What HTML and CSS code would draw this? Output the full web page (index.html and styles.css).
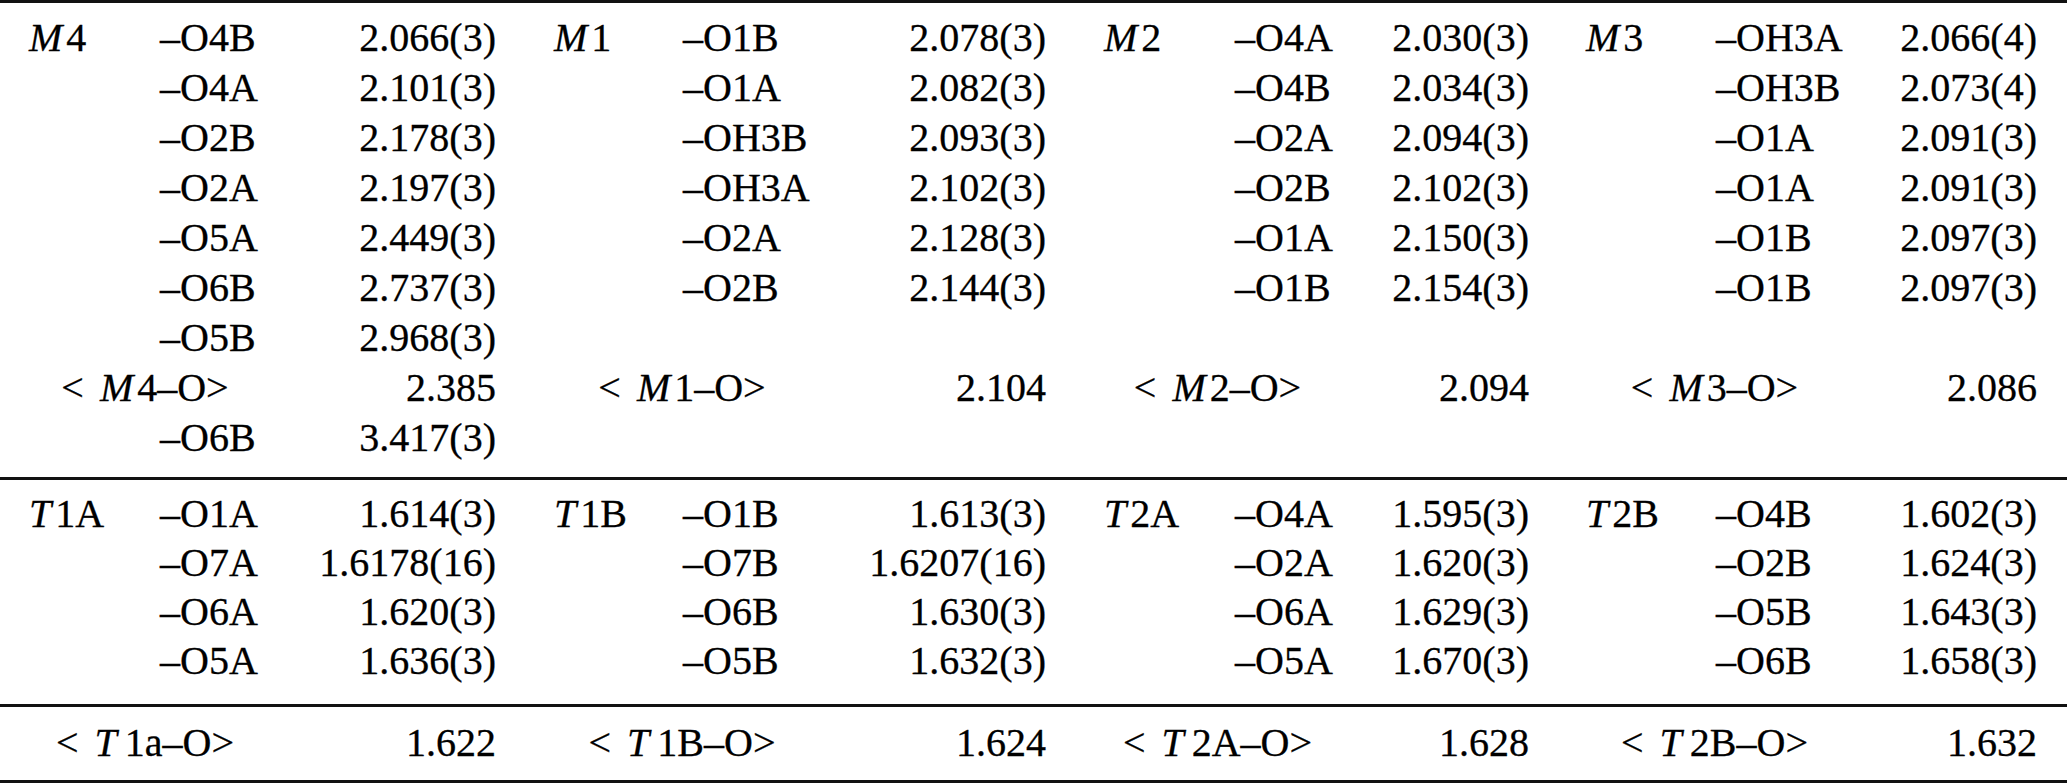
FILE: index.html
```html
<!DOCTYPE html>
<html>
<head>
<meta charset="utf-8">
<link rel="stylesheet" href="styles.css">
</head>
<body>
<div class="bonds">
  <div class="sec sec-m">
    <div class="lab g1"><i>M</i>4</div><div class="lig">–O4B</div><div class="val">2.066(3)</div>
    <div class="lab g2"><i>M</i>1</div><div class="lig">–O1B</div><div class="val">2.078(3)</div>
    <div class="lab g3"><i>M</i>2</div><div class="lig">–O4A</div><div class="val">2.030(3)</div>
    <div class="lab g4"><i>M</i>3</div><div class="lig">–OH3A</div><div class="val g4">2.066(4)</div>

    <div class="lab g1"></div><div class="lig">–O4A</div><div class="val">2.101(3)</div>
    <div class="lab g2"></div><div class="lig">–O1A</div><div class="val">2.082(3)</div>
    <div class="lab g3"></div><div class="lig">–O4B</div><div class="val">2.034(3)</div>
    <div class="lab g4"></div><div class="lig">–OH3B</div><div class="val g4">2.073(4)</div>

    <div class="lab g1"></div><div class="lig">–O2B</div><div class="val">2.178(3)</div>
    <div class="lab g2"></div><div class="lig">–OH3B</div><div class="val">2.093(3)</div>
    <div class="lab g3"></div><div class="lig">–O2A</div><div class="val">2.094(3)</div>
    <div class="lab g4"></div><div class="lig">–O1A</div><div class="val g4">2.091(3)</div>

    <div class="lab g1"></div><div class="lig">–O2A</div><div class="val">2.197(3)</div>
    <div class="lab g2"></div><div class="lig">–OH3A</div><div class="val">2.102(3)</div>
    <div class="lab g3"></div><div class="lig">–O2B</div><div class="val">2.102(3)</div>
    <div class="lab g4"></div><div class="lig">–O1A</div><div class="val g4">2.091(3)</div>

    <div class="lab g1"></div><div class="lig">–O5A</div><div class="val">2.449(3)</div>
    <div class="lab g2"></div><div class="lig">–O2A</div><div class="val">2.128(3)</div>
    <div class="lab g3"></div><div class="lig">–O1A</div><div class="val">2.150(3)</div>
    <div class="lab g4"></div><div class="lig">–O1B</div><div class="val g4">2.097(3)</div>

    <div class="lab g1"></div><div class="lig">–O6B</div><div class="val">2.737(3)</div>
    <div class="lab g2"></div><div class="lig">–O2B</div><div class="val">2.144(3)</div>
    <div class="lab g3"></div><div class="lig">–O1B</div><div class="val">2.154(3)</div>
    <div class="lab g4"></div><div class="lig">–O1B</div><div class="val g4">2.097(3)</div>

    <div class="lab g1"></div><div class="lig">–O5B</div><div class="val">2.968(3)</div>
    <div class="lab g2"></div><div class="lig"></div><div class="val"></div>
    <div class="lab g3"></div><div class="lig"></div><div class="val"></div>
    <div class="lab g4"></div><div class="lig"></div><div class="val g4"></div>

    <div class="avg g1"><span class="rel">&lt;</span><i>M</i>4–O&gt;</div><div class="val">2.385</div>
    <div class="avg g2"><span class="rel">&lt;</span><i>M</i>1–O&gt;</div><div class="val">2.104</div>
    <div class="avg g3"><span class="rel">&lt;</span><i>M</i>2–O&gt;</div><div class="val">2.094</div>
    <div class="avg g4"><span class="rel">&lt;</span><i>M</i>3–O&gt;</div><div class="val g4">2.086</div>

    <div class="lab g1"></div><div class="lig">–O6B</div><div class="val">3.417(3)</div>
  </div>

  <div class="sec sec-t">
    <div class="lab g1"><i>T</i>1A</div><div class="lig">–O1A</div><div class="val">1.614(3)</div>
    <div class="lab g2"><i>T</i>1B</div><div class="lig">–O1B</div><div class="val">1.613(3)</div>
    <div class="lab g3"><i>T</i>2A</div><div class="lig">–O4A</div><div class="val">1.595(3)</div>
    <div class="lab g4"><i>T</i>2B</div><div class="lig">–O4B</div><div class="val g4">1.602(3)</div>

    <div class="lab g1"></div><div class="lig">–O7A</div><div class="val">1.6178(16)</div>
    <div class="lab g2"></div><div class="lig">–O7B</div><div class="val">1.6207(16)</div>
    <div class="lab g3"></div><div class="lig">–O2A</div><div class="val">1.620(3)</div>
    <div class="lab g4"></div><div class="lig">–O2B</div><div class="val g4">1.624(3)</div>

    <div class="lab g1"></div><div class="lig">–O6A</div><div class="val">1.620(3)</div>
    <div class="lab g2"></div><div class="lig">–O6B</div><div class="val">1.630(3)</div>
    <div class="lab g3"></div><div class="lig">–O6A</div><div class="val">1.629(3)</div>
    <div class="lab g4"></div><div class="lig">–O5B</div><div class="val g4">1.643(3)</div>

    <div class="lab g1"></div><div class="lig">–O5A</div><div class="val">1.636(3)</div>
    <div class="lab g2"></div><div class="lig">–O5B</div><div class="val">1.632(3)</div>
    <div class="lab g3"></div><div class="lig">–O5A</div><div class="val">1.670(3)</div>
    <div class="lab g4"></div><div class="lig">–O6B</div><div class="val g4">1.658(3)</div>
  </div>

  <div class="sec sec-avg">
    <div class="avg g1"><span class="rel">&lt;</span><i class="t">T</i>1a–O&gt;</div><div class="val">1.622</div>
    <div class="avg g2"><span class="rel">&lt;</span><i class="t">T</i>1B–O&gt;</div><div class="val">1.624</div>
    <div class="avg g3"><span class="rel">&lt;</span><i class="t">T</i>2A–O&gt;</div><div class="val">1.628</div>
    <div class="avg g4"><span class="rel">&lt;</span><i class="t">T</i>2B–O&gt;</div><div class="val g4">1.632</div>
  </div>
</div>
</body>
</html>
```

FILE: styles.css
```css
html, body {
  margin: 0;
  padding: 0;
  background: #fff;
}

.bonds {
  width: 2067px;
  font-family: "Liberation Serif", "Times New Roman", serif;
  font-size: 40px;
  line-height: 50px;
  color: #000;
  -webkit-text-stroke: 0.3px #000;
}

.sec {
  display: grid;
  grid-template-columns: 160px 101px 235px 187px 127px 236px 189px 96px 198px 187px 127px 224px;
  border-top: 3px solid #111;
}

.sec-m {
  padding: 10px 0 14px;
  grid-auto-rows: 50px;
}

.sec-t {
  padding: 9px 0 19px;
  grid-auto-rows: 49px;
  line-height: 49px;
}

.sec-avg {
  padding: 11px 0 12px;
  grid-auto-rows: 50px;
  border-bottom: 3px solid #111;
}

.lab, .lig, .val, .avg {
  white-space: nowrap;
}

.lab i, .avg i {
  font-style: italic;
  margin-right: 4px;
}

.avg i.t {
  margin-right: 8px;
}

.g1.lab, .g1.avg { padding-left: 29px; }
.g2.lab, .g2.avg { padding-left: 58px; }
.g3.lab, .g3.avg { padding-left: 58px; }
.g4.lab, .g4.avg { padding-left: 57px; }

.lig { text-align: left; }

.val { text-align: right; }
.val.g4 { padding-right: 30px; }

.avg {
  grid-column: span 2;
  text-align: center;
}

.rel {
  margin-right: 16px;
}
```
